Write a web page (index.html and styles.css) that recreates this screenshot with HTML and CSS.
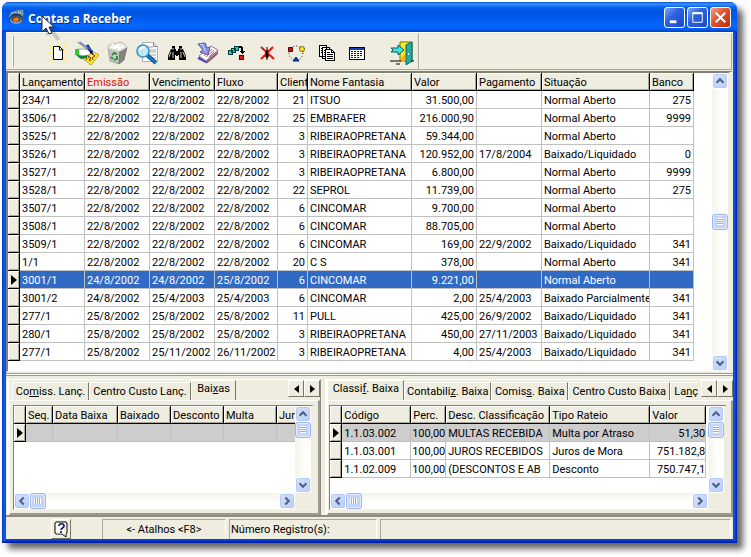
FILE: index.html
```html
<!DOCTYPE html>
<html lang="pt-BR">
<head>
  <meta charset="UTF-8">
  <title>Contas a Receber</title>
  <link rel="stylesheet" href="styles.css">
</head>
<body>
  <svg class="defs" aria-hidden="true">
    <symbol id="up" viewBox="0 0 16 16"><path d="M4 10l4-4 4 4" fill="none" stroke="#4d6185" stroke-width="2.4"/></symbol>
    <symbol id="down" viewBox="0 0 16 16"><path d="M4 6l4 4 4-4" fill="none" stroke="#4d6185" stroke-width="2.4"/></symbol>
    <symbol id="left" viewBox="0 0 16 16"><path d="M10 4L6 8l4 4" fill="none" stroke="#4d6185" stroke-width="2.4"/></symbol>
    <symbol id="right" viewBox="0 0 16 16"><path d="M6 4l4 4-4 4" fill="none" stroke="#4d6185" stroke-width="2.4"/></symbol>
    <symbol id="mark" viewBox="0 0 6 10"><path d="M0 0l6 5-6 5z" fill="#000"/></symbol>
  </svg>

  <div class="window">
    <header class="titlebar">
      <svg class="app-icon" viewBox="0 0 17 17">
        <path d="M1 7l2-4 4-1 2-2 2 1 3-1 2 2-1 4 1 4-3 5H5l-3-3z" fill="#3f6b93"/>
        <path d="M3 4l5-1 3 1 4-3M1 8l3-4 4-1M9 3l5 2" stroke="#9dbdd2" fill="none"/>
        <path d="M10 1l1 3M12 1l1 4M15 3l-1 4" stroke="#9fb8c8"/>
        <ellipse cx="8" cy="10" rx="7" ry="5" fill="#1b3f69"/>
        <ellipse cx="8" cy="11" rx="6" ry="4" fill="#8b9bab"/>
        <ellipse cx="8" cy="10" rx="5" ry="3" fill="#3a4a5e"/>
        <path d="M5 11c1-3 5-3 6-1-1 3-4 4-6 1z" fill="#f0721e"/>
      </svg>
      <h1>Contas a Receber</h1>
      <button class="win-btn" aria-label="Minimizar"><svg viewBox="0 0 20 20"><path d="M5 13h7v3H5z" fill="#fff"/></svg></button>
      <button class="win-btn" aria-label="Maximizar"><svg viewBox="0 0 20 20"><path d="M5 5h10v10H5z" fill="none" stroke="#fff"/><path d="M5 5.500h10" stroke="#fff" stroke-width="2"/></svg></button>
      <button class="win-btn close" aria-label="Fechar"><svg viewBox="0 0 20 20"><path d="M5 5l10 10M15 5L5 15" stroke="#fff" stroke-width="2"/></svg></button>
      <svg class="cursor" viewBox="0 0 22 28">
        <path d="M5 6l14 8-6 1 6 9-3 2-6-8-5 3z" fill="#000" opacity=".15"/>
        <path d="M1 1v16l4-4 3 6 3-1-3-6h5z" fill="#fff" stroke="#222"/>
      </svg>
    </header>

    <div class="toolbars">
      <div class="toolbar">
        <button aria-label="Novo"><svg viewBox="0 0 24 24">
          <path d="M4 4l4 4M13 1v4M22 3l-5 5M3 12h5M18 12h5M4 21l5-5M22 21l-5-5" stroke="#ffef6a" stroke-width="1.500"/>
          <path d="M8.500 5.500h6l3 3v10h-9z" fill="#fff" stroke="#000"/><path d="M14.500 5v4h4" fill="none" stroke="#000"/>
        </svg></button>
        <button aria-label="Editar"><svg viewBox="0 0 24 24">
          <path d="M7 17l8-8 9 5-8 10z" fill="#ffe92c" stroke="#8b7a00" stroke-width=".6"/>
          <path d="M10 16l2 1-1 2M13 15l3 2-2 2 2 1M17 12l3 3-3 2 1 2" fill="none" stroke="#201000" stroke-width=".8"/>
          <path d="M13 16l3 2M17 13l2 1" stroke="#e03a10"/>
          <path d="M3 8h5l7 1 3 3-4 2-7 1-5-2z" fill="#fff" stroke="#777" stroke-width=".6"/>
          <path d="M0 8h4v7l-4-1z" fill="#2fc832"/>
          <path d="M2 14l7 1 5-1-3 3-5 1-4-3z" fill="#0f7d3b"/>
          <path d="M3 1l13 10" stroke="#8a8a8a" stroke-width="1.500"/><path d="M12 4l5 8" stroke="#1b2b9d" stroke-width="3"/>
          <path d="M5 1l13 9" stroke="#4a72d0"/><path d="M15 9l4 5-4-2z" fill="#000"/>
        </svg></button>
        <button aria-label="Excluir"><svg viewBox="0 0 24 24">
          <path d="M3 5l4-3 4 1 3-2 4 1 4 4-2 4H5z" fill="#e9e9e9" stroke="#999" stroke-width=".7"/>
          <path d="M7 2l2 4 4-3 2 4 4-3M5 6l4 2 3-3 3 4" stroke="#fff" fill="none" stroke-width="1.400"/>
          <path d="M3 7l12 3-1 13-9-3z" fill="#c3c3b9" stroke="#8c8c86" stroke-width=".7"/>
          <path d="M15 10l7-4-3 13-5 4z" fill="#85857d" stroke="#6a6a65" stroke-width=".7"/>
          <path d="M3 7l12 3 7-4" fill="none" stroke="#eee"/>
          <path d="M7 14l2-2 3 1M12 15l0 3-3 1M8 18l-2-2" fill="none" stroke="#0f8b36" stroke-width="1.700"/>
        </svg></button>
        <button aria-label="Visualizar"><svg viewBox="0 0 24 24">
          <path d="M7.500 1.500h11l4 4v15h-15z" fill="#fbfbfb" stroke="#b0b0b0"/><path d="M18.500 1.500v4h4" fill="#ddd" stroke="#888"/>
          <path d="M10 6h8M13 9h8M13 11h8M13 14h8M15 17h6" stroke="#a4a4a4"/>
          <path d="M12 14l9 8" stroke="#0754a9" stroke-width="4"/><path d="M12 14l9 8" stroke="#41a0ef"/>
          <circle cx="8" cy="10" r="6" fill="#b9e9fb" fill-opacity=".85" stroke="#3d91c5" stroke-width="1.600"/>
          <path d="M5 9c1-3 3-3 5-3" stroke="#fff" fill="none" stroke-width="2"/>
        </svg></button>
        <button aria-label="Localizar"><svg viewBox="0 0 24 24">
          <path d="M7 5h3v3h1v2h2V8h1V5h3v3h1l3 7v4h-7v-5h-1v1h-2v-1h-1v5H3v-4l3-7h1z" fill="#000"/>
          <path d="M8 7v2M16 7v2M6 11l-2 5M8 11v6M16 11v6M18 11l2 5" stroke="#fff" stroke-width=".8"/>
        </svg></button>
        <button aria-label="Baixar"><svg viewBox="0 0 24 24">
          <path d="M3 17l12-10 8 3-11 12z" fill="#7543a5" stroke="#432669" stroke-width=".6"/><path d="M4 15L16 5l7 4-12 11z" fill="#fff" stroke="#8973a0"/>
          <path d="M9 15l8-7M11 16l8-7M14 16l5-5" stroke="#e05a50"/><path d="M12 20L23 9l-1 5-10 8z" fill="#b97a6a"/>
          <path d="M12 22l11-10" stroke="#6a3aa0"/>
          <path d="M3 17l8 4" stroke="#5555a8" stroke-width="2"/>
          <path d="M3 3l7-1 2 5 3-1-2 8-8-3 3-2z" fill="#8b95e0" stroke="#5259a5"/><path d="M5 3l3 1 2 6" stroke="#d4daff" fill="none"/>
        </svg></button>
        <button aria-label="Transferir"><svg viewBox="0 0 24 24" shape-rendering="crispEdges">
          <path d="M9.500 5.500h4v4h-4zM6.500 7.500h4v4h-4zM3.500 9.500h4v4h-4z" fill="#20d7c9" stroke="#003b3b"/>
          <path d="M14 5h3v1h1v4h2l-3 3-3-3h2V7h-2z" fill="#000"/><path d="M14.500 14.500h4v4h-4z" fill="#e01919" stroke="#400"/>
        </svg></button>
        <button aria-label="Cancelar"><svg viewBox="0 0 24 24">
          <ellipse cx="12" cy="13" rx="2" ry="4" fill="#000"/><path d="M12 6v13" stroke="#000"/>
          <path d="M6 6l13 12M18 6L6 18" stroke="#e5150c" stroke-width="2"/>
          <path d="M12 10v4" stroke="#000" stroke-width="2"/>
        </svg></button>
        <button aria-label="Ciclo"><svg viewBox="0 0 24 24">
          <circle cx="11" cy="12" r="7" fill="none" stroke="#111" stroke-dasharray="1 2"/>
          <path d="M3.500 6.500h4v4h-4z" fill="#d71016" stroke="#500"/><circle cx="17" cy="8" r="2.500" fill="#ffe823" stroke="#776b00"/>
          <path d="M11 16l3 4H8z" fill="#123fbd" stroke="#001d7a"/>
        </svg></button>
        <button aria-label="Copiar"><svg viewBox="0 0 24 24" shape-rendering="crispEdges">
          <path d="M4.500 4.500h7v11h-7zM7.500 6.500h7v11h-7z" fill="#fff" stroke="#000"/>
          <path d="M10.500 8.500h6l3 3v8h-9z" fill="#fff" stroke="#000"/><path d="M16.500 8v3h3" stroke="#000" fill="none"/>
          <path d="M6 7.500h1M6 9.500h1M6 11.500h1M9 9.500h1M9 11.500h1M9 13.500h1M12 11.500h3M12 13.500h6M12 15.500h6M12 17.500h6" stroke="#000"/>
        </svg></button>
        <button aria-label="Agenda"><svg viewBox="0 0 24 24" shape-rendering="crispEdges">
          <path d="M4.500 6.500h15v12h-15z" fill="#fff" stroke="#000"/><path d="M5 7h14v2H5z" fill="#1740b5"/>
          <path d="M6 10.500h12M6 12.500h12M6 14.500h12M6 16.500h9" stroke="#101060" stroke-dasharray="2 1"/>
        </svg></button>
        <button class="exit" aria-label="Sair"><svg viewBox="0 0 24 24">
          <path d="M10 1h12v19H10z" fill="#ffe62b" stroke="#6d7600"/><path d="M11 17l4-4v7h-4z" fill="#ffae15"/>
          <path d="M16 4l6-3v19l-6 4z" fill="#28a9a1" stroke="#006a6a"/><path d="M18 12h1v2h-1z" fill="#fff"/>
          <path d="M1 7h7V4l6 5-6 5v-3H1l2-2z" fill="#43e8df" stroke="#065b60"/>
          <path d="M0 20h11M6 23h4M21 20h3" stroke="#000"/>
        </svg></button>
      </div>
    </div>

    <main class="grid main-grid">
      <div class="grid-body">
        <table>
          <colgroup><col class="w12"><col class="w65"><col class="w65"><col class="w65"><col class="w63"><col class="w30"><col class="w104"><col class="w65"><col class="w65"><col class="w108"><col class="w44"></colgroup>
          <thead>
            <tr><th></th><th>Lançamento</th><th class="sorted">Emissão</th><th>Vencimento</th><th>Fluxo</th><th>Client</th><th>Nome Fantasia</th><th>Valor</th><th>Pagamento</th><th>Situação</th><th>Banco</th></tr>
          </thead>
          <tbody>
            <tr><th></th><td>234/1</td><td>22/8/2002</td><td>22/8/2002</td><td>22/8/2002</td><td class="num">21</td><td>ITSUO</td><td class="num">31.500,00</td><td></td><td>Normal Aberto</td><td class="num">275</td></tr>
            <tr><th></th><td>3506/1</td><td>22/8/2002</td><td>22/8/2002</td><td>22/8/2002</td><td class="num">25</td><td>EMBRAFER</td><td class="num">216.000,90</td><td></td><td>Normal Aberto</td><td class="num">9999</td></tr>
            <tr><th></th><td>3525/1</td><td>22/8/2002</td><td>22/8/2002</td><td>22/8/2002</td><td class="num">3</td><td>RIBEIRAOPRETANA</td><td class="num">59.344,00</td><td></td><td>Normal Aberto</td><td class="num"></td></tr>
            <tr><th></th><td>3526/1</td><td>22/8/2002</td><td>22/8/2002</td><td>22/8/2002</td><td class="num">3</td><td>RIBEIRAOPRETANA</td><td class="num">120.952,00</td><td>17/8/2004</td><td>Baixado/Liquidado</td><td class="num">0</td></tr>
            <tr><th></th><td>3527/1</td><td>22/8/2002</td><td>22/8/2002</td><td>22/8/2002</td><td class="num">3</td><td>RIBEIRAOPRETANA</td><td class="num">6.800,00</td><td></td><td>Normal Aberto</td><td class="num">9999</td></tr>
            <tr><th></th><td>3528/1</td><td>22/8/2002</td><td>22/8/2002</td><td>22/8/2002</td><td class="num">22</td><td>SEPROL</td><td class="num">11.739,00</td><td></td><td>Normal Aberto</td><td class="num">275</td></tr>
            <tr><th></th><td>3507/1</td><td>22/8/2002</td><td>22/8/2002</td><td>22/8/2002</td><td class="num">6</td><td>CINCOMAR</td><td class="num">9.700,00</td><td></td><td>Normal Aberto</td><td class="num"></td></tr>
            <tr><th></th><td>3508/1</td><td>22/8/2002</td><td>22/8/2002</td><td>22/8/2002</td><td class="num">6</td><td>CINCOMAR</td><td class="num">88.705,00</td><td></td><td>Normal Aberto</td><td class="num"></td></tr>
            <tr><th></th><td>3509/1</td><td>22/8/2002</td><td>22/8/2002</td><td>22/8/2002</td><td class="num">6</td><td>CINCOMAR</td><td class="num">169,00</td><td>22/9/2002</td><td>Baixado/Liquidado</td><td class="num">341</td></tr>
            <tr><th></th><td>1/1</td><td>22/8/2002</td><td>22/8/2002</td><td>22/8/2002</td><td class="num">20</td><td>C S</td><td class="num">378,00</td><td></td><td>Normal Aberto</td><td class="num">341</td></tr>
            <tr class="selected"><th><svg><use href="#mark"/></svg></th><td>3001/1</td><td>24/8/2002</td><td>24/8/2002</td><td>25/8/2002</td><td class="num">6</td><td>CINCOMAR</td><td class="num">9.221,00</td><td></td><td>Normal Aberto</td><td class="num"></td></tr>
            <tr><th></th><td>3001/2</td><td>24/8/2002</td><td>25/4/2003</td><td>25/4/2003</td><td class="num">6</td><td>CINCOMAR</td><td class="num">2,00</td><td>25/4/2003</td><td>Baixado Parcialmente</td><td class="num">341</td></tr>
            <tr><th></th><td>277/1</td><td>25/8/2002</td><td>25/8/2002</td><td>25/8/2002</td><td class="num">11</td><td>PULL</td><td class="num">425,00</td><td>26/9/2002</td><td>Baixado/Liquidado</td><td class="num">341</td></tr>
            <tr><th></th><td>280/1</td><td>25/8/2002</td><td>25/8/2002</td><td>25/8/2002</td><td class="num">3</td><td>RIBEIRAOPRETANA</td><td class="num">450,00</td><td>27/11/2003</td><td>Baixado/Liquidado</td><td class="num">341</td></tr>
            <tr><th></th><td>277/1</td><td>25/8/2002</td><td>25/11/2002</td><td>26/11/2002</td><td class="num">3</td><td>RIBEIRAOPRETANA</td><td class="num">4,00</td><td>25/4/2003</td><td>Baixado/Liquidado</td><td class="num">341</td></tr>
          </tbody>
        </table>
      </div>
      <div class="vscroll">
        <button aria-label="Subir"><svg><use href="#up"/></svg></button>
        <span class="track"></span>
        <span class="thumb"></span>
        <span class="track"></span>
        <button aria-label="Descer"><svg><use href="#down"/></svg></button>
      </div>
    </main>

    <div class="splitter"></div>

    <div class="panels">
      <section class="panel panel-left">
        <div class="tabs">
          <div class="tab-list" role="tablist">
            <button role="tab">Co<u>m</u>iss. Lanç.</button>
            <button role="tab" class="wide">Centro Custo Lanç.</button>
            <button role="tab" class="active narrow" aria-selected="true">Bai<u>x</u>as</button>
          </div>
          <button class="tab-arrow" aria-label="Anterior"><svg viewBox="0 0 5 8"><path d="M5 0v8L0 4z"/></svg></button>
          <button class="tab-arrow" aria-label="Próximo"><svg viewBox="0 0 5 8"><path d="M0 0v8l5-4z"/></svg></button>
        </div>
        <div class="page">
          <div class="grid">
            <div class="grid-col">
              <div class="grid-body">
                <table>
                  <colgroup><col class="w12"><col class="w27"><col class="w65"><col class="w53"><col class="w53"><col class="w53"><col class="w53"></colgroup>
                  <thead><tr><th></th><th>Seq.</th><th>Data Baixa</th><th>Baixado</th><th>Desconto</th><th>Multa</th><th>Jur</th></tr></thead>
                  <tbody><tr class="current"><th><svg><use href="#mark"/></svg></th><td></td><td></td><td></td><td></td><td></td><td></td></tr></tbody>
                </table>
              </div>
              <div class="hscroll">
                <button aria-label="Esquerda"><svg><use href="#left"/></svg></button>
                <span class="thumb"></span>
                <span class="track"></span>
                <button aria-label="Direita"><svg><use href="#right"/></svg></button>
              </div>
            </div>
            <div class="vscroll corner">
              <button aria-label="Subir"><svg><use href="#up"/></svg></button>
              <span class="thumb"></span>
              <span class="track"></span>
              <button aria-label="Descer"><svg><use href="#down"/></svg></button>
            </div>
          </div>
        </div>
      </section>

      <section class="panel panel-right">
        <div class="tabs">
          <div class="tab-list" role="tablist">
            <button role="tab" class="active" aria-selected="true">Classi<u>f</u>. Baixa</button>
            <button role="tab" class="medium">Contabili<u>z</u>. Baixa</button>
            <button role="tab">Comis<u>s</u>. Baixa</button>
            <button role="tab" class="wide">Centro Custo Baixa</button>
            <button role="tab" class="last">La<u>n</u>ç</button>
          </div>
          <button class="tab-arrow" aria-label="Anterior"><svg viewBox="0 0 5 8"><path d="M5 0v8L0 4z"/></svg></button>
          <button class="tab-arrow" aria-label="Próximo"><svg viewBox="0 0 5 8"><path d="M0 0v8l5-4z"/></svg></button>
        </div>
        <div class="page">
          <div class="grid">
            <div class="grid-col">
              <div class="grid-body">
                <table>
                  <colgroup><col class="w12"><col class="w69"><col class="w35"><col class="w104"><col class="w100"><col class="w56"></colgroup>
                  <thead><tr><th></th><th>Código</th><th>Perc.</th><th>Desc. Classificação</th><th>Tipo Rateio</th><th>Valor</th></tr></thead>
                  <tbody>
                    <tr class="current"><th><svg><use href="#mark"/></svg></th><td>1.1.03.002</td><td class="num tight">100,00</td><td>MULTAS RECEBIDA</td><td>Multa por Atraso</td><td class="num tight">51,30</td></tr>
                    <tr><th></th><td>1.1.03.001</td><td class="num tight">100,00</td><td>JUROS RECEBIDOS</td><td>Juros de Mora</td><td class="num tight">751.182,8</td></tr>
                    <tr><th></th><td>1.1.02.009</td><td class="num tight">100,00</td><td>(DESCONTOS E AB</td><td>Desconto</td><td class="num tight">750.747,1</td></tr>
                  </tbody>
                </table>
              </div>
              <div class="hscroll">
                <button aria-label="Esquerda"><svg><use href="#left"/></svg></button>
                <span class="thumb"></span>
                <span class="track"></span>
                <button aria-label="Direita"><svg><use href="#right"/></svg></button>
              </div>
            </div>
            <div class="vscroll corner">
              <button aria-label="Subir"><svg><use href="#up"/></svg></button>
              <span class="thumb"></span>
              <span class="track"></span>
              <button aria-label="Descer"><svg><use href="#down"/></svg></button>
            </div>
          </div>
        </div>
      </section>
    </div>

    <footer class="statusbar">
      <button class="help" aria-label="Ajuda"><svg viewBox="0 0 14 16">
        <path d="M2 1h10l1 1v10l-1 1v3l-4-3H2l-1-1V2z" fill="#fff" stroke="#000"/>
        <path d="M3 12h5l3 2V3" fill="none" stroke="#e8df8e"/>
        <path d="M5 5c0-3 5-3 5 0 0 2-3 2-3 4M7 10v2" fill="none" stroke="#10106e" stroke-width="1.600"/>
      </svg></button>
      <span class="status shortcut">&lt;- Atalhos &lt;F8&gt;</span>
      <span class="status count">Número Registro(s):</span>
      <span class="status rest"></span>
    </footer>
  </div>
</body>
</html>
```

FILE: styles.css
```css
* {
  box-sizing: border-box;
}

body {
  margin: 0;
  padding: 2px 14px 14px 2px;
  min-height: 100vh;
  display: flex;
  background: #fff;
  color: #000;
  font-family: Roboto, "Liberation Sans", sans-serif;
  font-size: 11px;
  line-height: 14px;
}

button {
  margin: 0;
  padding: 0;
  border: 0;
  background: none;
  color: inherit;
  font: inherit;
}

svg {
  display: block;
}

.defs {
  position: absolute;
  width: 0;
  height: 0;
}

.window {
  flex: 1;
  min-width: 0;
  display: flex;
  flex-direction: column;
  padding: 0 4px 4px;
  background: linear-gradient(90deg, #0a2fc0, #0a5cf0 2px, #0a5cf0 3px, #0841d8 4px, #0841d8 calc(100% - 4px), #0a5cf0 calc(100% - 3px), #001ea0);
  border-radius: 7px 7px 0 0;
  box-shadow: inset 0 -2px #0020a8, 6px 6px 6px rgba(0, 0, 0, 0.6);
}

/* title bar */
.titlebar {
  position: relative;
  height: 30px;
  margin: 0 -4px;
  padding: 1px 6px 0;
  display: flex;
  align-items: center;
  gap: 2px;
  border-radius: 7px 7px 0 0;
  background: linear-gradient(#0a4fd0, #3a93ff 2px, #0667f0 5px, #0054e3 9px, #0058ea 15px, #0468ff 24px, #0360f5 27px, #0040c0);
}

.app-icon {
  width: 17px;
  height: 17px;
}

h1 {
  flex: 1;
  margin: 0;
  padding: 3px 0 0 1px;
  color: #fff;
  font-family: "Open Sans", "Noto Sans", sans-serif;
  font-size: 12px;
  font-weight: 700;
  text-shadow: 1px 1px #0a2a8a;
}

.win-btn {
  width: 21px;
  height: 21px;
  border: 1px solid #fff;
  border-radius: 3px;
  background: linear-gradient(135deg, #7ea6f5, #2f62e0 40%, #1c49c8);
}

.win-btn.close {
  background: linear-gradient(135deg, #f2a28a, #e0512c 45%, #b93008);
}

.cursor {
  position: absolute;
  left: 39px;
  top: 13px;
  width: 22px;
  height: 28px;
  z-index: 2;
}

/* toolbar */
.toolbars {
  display: flex;
  height: 39px;
  padding: 1px 1px 1px 0;
  background: #ece9d8;
  border-top: 1px solid #fff;
}

.toolbars::after {
  content: "";
  flex: 1;
  background: #eeeddf;
  border: solid #aca899;
  border-width: 0 1px 1px 0;
  box-shadow: inset 1px 0 #f8f7f0;
}

.toolbar {
  display: flex;
  align-items: center;
  padding: 2px 1px 0 36px;
  background: linear-gradient(90deg, transparent 6px, #fff 6px, #fff 7px, #aca899 7px, #aca899 8px, transparent 8px) 0 2px / 100% 31px no-repeat #eeeddf;
  border: solid #aca899;
  border-width: 0 1px 1px 0;
}

.toolbar button {
  width: 30px;
  padding: 0 3px;
}

.toolbar button.exit {
  margin-left: 15px;
}

.toolbar svg {
  width: 24px;
  height: 24px;
}

/* data grids */
.grid {
  display: flex;
  min-width: 0;
  background: #fff;
  border: solid #808075;
  border-width: 2px 3px 1px 1px;
  border-right-color: #eeeddf;
  border-bottom-color: #f4f3ea;
}

.main-grid {
  flex: 1;
  border-left-width: 2px;
  border-right-width: 5px;
}

.grid-col {
  flex: 1;
  min-width: 0;
  display: flex;
  flex-direction: column;
}

.grid-body {
  flex: 1;
  min-width: 0;
  overflow: hidden;
}

table {
  width: 0;
  table-layout: fixed;
  border-collapse: separate;
  border-spacing: 0;
}

.w12 { width: 12px; }
.w27 { width: 27px; }
.w30 { width: 30px; }
.w35 { width: 35px; }
.w44 { width: 44px; }
.w53 { width: 53px; }
.w56 { width: 56px; }
.w63 { width: 63px; }
.w65 { width: 65px; }
.w69 { width: 69px; }
.w100 { width: 100px; }
.w104 { width: 104px; }
.w108 { width: 108px; }

th,
td {
  height: 18px;
  padding: 3px 0 0 2px;
  overflow: hidden;
  white-space: nowrap;
  text-align: left;
  font-weight: 400;
}

th {
  background: #eeeddf;
  border: solid #000;
  border-width: 0 1px 1px 0;
  box-shadow: inset 1px 1px #fff, inset -1px -1px #aca899;
}

tbody th {
  padding-top: 0;
}

tbody th svg {
  width: 6px;
  height: 10px;
  margin-left: 1px;
}

td {
  border: solid #c0c0c0;
  border-width: 0 1px 1px 0;
}

.sorted {
  color: #e01010;
}

.num {
  padding-right: 2px;
  text-align: right;
}

.tight {
  padding-left: 0;
  padding-right: 0;
}

.selected td {
  background: #316ac5;
  color: #fff;
}

.current td {
  background: #cdcdcd;
  border-color: #c0c0c0;
}

/* scroll bars */
.vscroll,
.hscroll {
  display: flex;
  background: #f8f8f3;
}

.vscroll {
  width: 16px;
  flex-direction: column;
}

.hscroll {
  height: 16px;
}

.vscroll.corner {
  border-bottom: 16px solid #eeeddf;
}

.vscroll button,
.hscroll button,
.thumb {
  width: 16px;
  height: 16px;
  flex: none;
  border: 1px solid #fff;
  border-radius: 3px;
  background: linear-gradient(135deg, #d6e2ff, #b9cdfa);
  box-shadow: inset 0 0 0 1px #b5c9f3;
}

.vscroll svg,
.hscroll svg {
  width: 14px;
  height: 14px;
}

.thumb {
  border-color: #9eb5e8;
  box-shadow: inset 0 0 0 1px #e4edff;
}

.vscroll .thumb {
  background: repeating-linear-gradient(#fff 0 1px, #8caeea 1px 2px) 4px 3px / 6px 7px no-repeat #c3d4fc;
}

.hscroll .thumb {
  background: repeating-linear-gradient(90deg, #fff 0 1px, #8caeea 1px 2px) 3px 4px / 7px 6px no-repeat #c3d4fc;
}

.track {
  flex: 1;
  background: linear-gradient(90deg, #f4f3ec, #fefefc 60%);
}

.hscroll .track {
  background: linear-gradient(#f4f3ec, #fefefc 60%);
}

.splitter {
  height: 7px;
  background: #eeeddf;
  border-top: 1px solid #eeeddf;
  box-shadow: inset 0 1px #9c9a8c, inset 0 2px #fff, inset 0 3px #9c9a8c;
}

/* lower panels */
.panels {
  display: flex;
  gap: 4px;
  padding-left: 1px;
  background: #eeeddf;
  border-bottom: 2px solid #8f8d80;
}

.panel {
  min-width: 0;
  height: 136px;
  display: flex;
  flex-direction: column;
  border: solid #fff;
  border-width: 1px 0 0 2px;
}

.panel-left {
  flex: 313 1 0;
  border-right: 1px solid #8f8d80;
}

.panel-right {
  flex: 408 1 0;
}

.tabs {
  display: flex;
  height: 20px;
}

.tab-list {
  flex: 1;
  min-width: 0;
  display: flex;
  align-items: flex-end;
  overflow: hidden;
}

.panel-left .tab-list {
  padding-left: 3px;
}

.tab-list button {
  flex: none;
  width: 77px;
  height: 18px;
  white-space: nowrap;
  border: solid #fff;
  border-width: 1px 1px 0 1px;
  border-right-color: #77756a;
}

.tab-list button.active {
  height: 20px;
  padding-bottom: 4px;
}

.tab-list button.wide {
  width: 102px;
}

.tab-list button.medium {
  width: 87px;
}

.tab-list button.narrow {
  width: 45px;
}

.tab-list button.last {
  width: auto;
  padding-left: 3px;
  border-right: 0;
}

.tab-arrow {
  width: 16px;
  height: 17px;
  display: flex;
  align-items: center;
  justify-content: center;
  border: solid #fff;
  border-width: 1px;
  border-right-color: #77756a;
  border-bottom-color: #77756a;
}

.tab-arrow svg {
  width: 5px;
  height: 8px;
}

.page {
  flex: 1;
  min-height: 0;
  display: flex;
  padding: 4px 4px 3px 3px;
  border: solid #fff;
  border-width: 1px;
  border-right: 2px solid #9c9a8c;
  border-bottom: 2px solid #9c9a8c;
}

.page .grid {
  flex: 1;
  border-top-width: 1px;
}

.panel-right .page {
  padding-left: 1px;
}

/* status bar */
.statusbar {
  display: flex;
  height: 22px;
  padding: 2px 2px 0 45px;
  gap: 3px;
  background: #eeeddf;
}

.help {
  width: 20px;
  height: 20px;
  padding: 1px 2px;
  border: solid #fff;
  border-width: 1px;
  border-right-color: #77756a;
  border-bottom-color: #77756a;
}

.help svg {
  width: 14px;
  height: 16px;
}

.status {
  height: 20px;
  padding: 3px 1px 0;
  white-space: nowrap;
  border: solid #aca899;
  border-width: 1px 1px 0 1px;
  border-right-color: #fff;
}

.shortcut {
  width: 124px;
  margin-left: 28px;
  text-align: center;
}

.count {
  width: 148px;
}

.rest {
  flex: 1;
}
```
